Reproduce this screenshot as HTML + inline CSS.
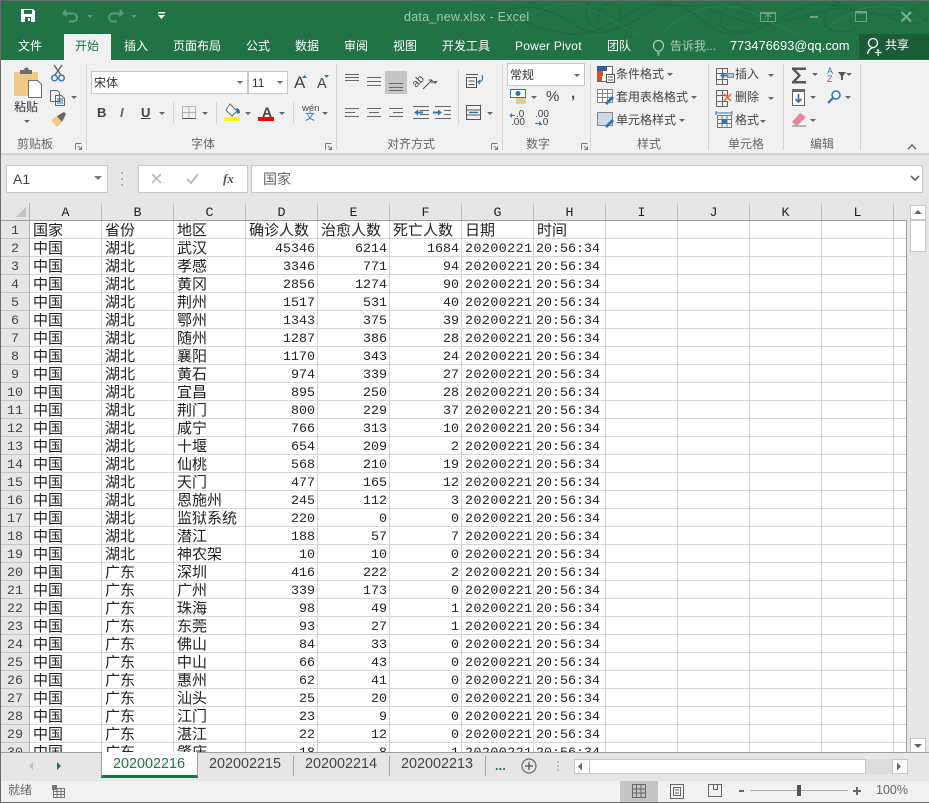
<!DOCTYPE html>
<html lang="zh"><head><meta charset="utf-8"><title>data_new.xlsx - Excel</title>
<style>
*{box-sizing:border-box}
html,body{margin:0;padding:0}
body{width:929px;height:803px;position:relative;overflow:hidden;background:#e6e6e6;font-family:"Liberation Sans","Noto Sans CJK SC",sans-serif;font-size:12px;color:#444}
.a{position:absolute}
.t{position:absolute;line-height:16px;white-space:nowrap}
.w{color:#fff}
.g{color:#666}
.box{position:absolute;background:#fff;border:1px solid #c6c6c6}
.sep{position:absolute;width:1px;background:#d4d4d4}
#grid{position:absolute;left:30px;top:221px;width:876px;height:531px;overflow:hidden;background-color:#fff;background-image:repeating-linear-gradient(90deg,transparent 0 71px,#d4d4d4 71px 72px),repeating-linear-gradient(180deg,transparent 0 17px,#d4d4d4 17px 18px)}
#grid table{position:relative;top:2px;border-collapse:collapse;table-layout:fixed;width:576px;font-family:"Liberation Mono","WenQuanYi Zen Hei","Noto Sans CJK SC",monospace;color:#222}
#grid td{width:72px;height:18px;padding:0 2px 0 3px;font-size:15px;line-height:18px;white-space:nowrap;overflow:hidden;text-align:left}
#grid td:nth-child(n+4):nth-child(-n+8){font-size:13.33px}
#grid td:nth-child(n+4):nth-child(-n+6){text-align:right;padding-right:3px}
#grid td:nth-child(7){text-align:right;letter-spacing:.45px;padding-right:2px}
#grid td:nth-child(8){padding-left:2px}
#grid tr:first-child td{font-size:15px!important;text-align:left!important;letter-spacing:0!important;padding-left:3px!important}
#rh{position:absolute;left:1px;top:221px;width:28px;height:531px;overflow:hidden;font-family:"Liberation Mono",monospace;font-size:13.33px;text-align:center;color:#444;background:#e6e6e6}
#rh div{height:18px;line-height:22px;overflow:hidden;border-bottom:1px solid #c6c6c6}
.ch{position:absolute;top:204px;height:16px;width:72px;line-height:19px;text-align:center;font-family:"Liberation Mono",monospace;font-size:13.33px;color:#222;border-right:1px solid #c0c0c0}
.tab{position:absolute;top:753px;height:25px;line-height:23px;font-size:14.4px;color:#444}
</style></head><body>

<!-- title bar -->
<div class="a" style="left:0;top:0;width:929px;height:60px;background:#217346;border-top:1px solid #6b6b6b"></div>

<svg class="a" style="left:0;top:0" width="929" height="60" fill="none">
<g stroke="#1d6a40" stroke-width="1.3">
<path d="M480 28C500 6 530 2 555 14S590 40 620 28 650 2 690 6 740 30 780 22 830 2 870 12 910 30 928 18"/>
<path d="M478 6C510 10 540 34 575 34S625 6 660 4 705 34 735 34 790 6 820 4 880 30 925 4"/>
<path d="M590 2C580 14 590 30 606 30S626 14 616 6 596 10 600 20"/>
<path d="M735 2C760 12 760 32 738 32S716 16 728 8"/>
<path d="M840 2C816 12 820 32 842 32S860 14 850 8"/>
</g>
<g stroke="#2b7c52" stroke-width="1">
<path d="M510 34C520 18 545 4 570 4S610 24 640 34"/>
<path d="M660 34C680 16 700 6 725 6S770 26 800 34"/>
<path d="M820 34C840 16 860 6 885 6S915 18 928 26"/>
</g>
</svg>

<div class="a" style="left:64px;top:34px;width:47px;height:27px;background:#f1f1f1"></div>
<div class="a" style="left:859px;top:34px;width:70px;height:25px;background:#1a5c38"></div>

<div class="t" style="left:404px;top:9px;font-size:12.5px;color:#a3c7b3;letter-spacing:.25px">data_new.xlsx - Excel</div>
<div class="t w" style="left:18px;top:38px">文件</div>
<div class="t" style="left:75px;top:38px;color:#217346">开始</div>
<div class="t w" style="left:124px;top:38px">插入</div>
<div class="t w" style="left:173px;top:38px">页面布局</div>
<div class="t w" style="left:246px;top:38px">公式</div>
<div class="t w" style="left:295px;top:38px">数据</div>
<div class="t w" style="left:344px;top:38px">审阅</div>
<div class="t w" style="left:393px;top:38px">视图</div>
<div class="t w" style="left:442px;top:38px">开发工具</div>
<div class="t w" style="left:515px;top:38px;letter-spacing:.25px">Power Pivot</div>
<div class="t w" style="left:607px;top:38px">团队</div>
<div class="t" style="left:670px;top:38px;color:#a9cdb9">告诉我...</div>
<div class="t w" style="left:730px;top:38px;font-size:12.7px;letter-spacing:.1px">773476693@qq.com</div>
<div class="t w" style="left:885px;top:37px">共享</div>

<!-- ribbon -->
<div class="a" style="left:0;top:60px;width:929px;height:95px;background:#f1f1f1;border-bottom:2px solid #d2d2d2"></div>
<div class="sep" style="left:86px;top:64px;height:86px"></div>
<div class="sep" style="left:336px;top:64px;height:86px"></div>
<div class="sep" style="left:502px;top:64px;height:86px"></div>
<div class="sep" style="left:590px;top:64px;height:86px"></div>
<div class="sep" style="left:708px;top:64px;height:86px"></div>
<div class="sep" style="left:783px;top:64px;height:86px"></div>
<div class="sep" style="left:860px;top:64px;height:86px"></div>
<div class="sep" style="left:173px;top:102px;height:22px"></div>
<div class="sep" style="left:216px;top:102px;height:22px"></div>
<div class="sep" style="left:293px;top:102px;height:22px"></div>
<div class="sep" style="left:458px;top:70px;height:55px"></div>

<div class="t" style="left:14px;top:99px;font-size:12px;color:#333">粘贴</div>
<div class="t g" style="left:17px;top:136px">剪贴板</div>
<div class="t g" style="left:191px;top:136px">字体</div>
<div class="t g" style="left:387px;top:136px">对齐方式</div>
<div class="t g" style="left:526px;top:136px">数字</div>
<div class="t g" style="left:637px;top:136px">样式</div>
<div class="t g" style="left:728px;top:136px">单元格</div>
<div class="t g" style="left:810px;top:136px">编辑</div>

<div class="box" style="left:91px;top:71px;width:157px;height:23px"></div>
<div class="box" style="left:248px;top:71px;width:40px;height:23px"></div>
<div class="t" style="left:94px;top:75px;color:#333">宋体</div>
<div class="t" style="left:252px;top:75px;color:#333">11</div>
<div class="a" style="left:385px;top:71px;width:22px;height:23px;background:#c6c6c6"></div>
<div class="box" style="left:507px;top:63px;width:78px;height:23px"></div>
<div class="t" style="left:510px;top:67px;color:#333">常规</div>

<div class="t" style="left:97px;top:105px;font-weight:bold;font-size:13px">B</div>
<div class="t" style="left:120px;top:105px;font-style:italic;font-weight:bold;font-size:13px;color:#666">I</div>
<div class="t" style="left:141px;top:105px;font-weight:bold;font-size:13px;text-decoration:underline">U</div>
<div class="t" style="left:294px;top:75px;font-size:17px">A</div>
<div class="t" style="left:317px;top:76px;font-size:14.5px">A</div>
<div class="t" style="left:262px;top:104px;font-weight:bold;font-size:14px">A</div>
<div class="t" style="left:302px;top:103px;font-size:9.5px;line-height:12px;color:#444">wén</div>
<div class="t" style="left:305px;top:112px;font-size:10px;line-height:12px;color:#2b72b5">文</div>
<div class="t" style="left:546px;top:89px;font-size:15px">%</div>
<div class="t" style="left:571px;top:86px;font-size:15px;font-weight:bold">,</div>
<div class="t" style="left:516px;top:107px;font-size:10px">.0</div>
<div class="t" style="left:511px;top:115px;font-size:10px">.00</div>
<div class="t" style="left:535px;top:107px;font-size:10px">.00</div>
<div class="t" style="left:540px;top:115px;font-size:10px">.0</div>

<div class="t" style="left:616px;top:66px">条件格式</div>
<div class="t" style="left:616px;top:89px">套用表格格式</div>
<div class="t" style="left:616px;top:112px">单元格样式</div>
<div class="t" style="left:735px;top:66px">插入</div>
<div class="t" style="left:735px;top:89px">删除</div>
<div class="t" style="left:735px;top:112px">格式</div>

<!-- formula bar -->
<div class="box" style="left:6px;top:165px;width:102px;height:28px"></div>
<div class="t" style="left:13px;top:171px;font-size:14px;color:#444">A1</div>
<div class="box" style="left:138px;top:165px;width:110px;height:28px"></div>
<div class="box" style="left:251px;top:165px;width:672px;height:28px"></div>
<div class="t" style="left:263px;top:171px;font-size:14px;color:#666;font-family:'WenQuanYi Zen Hei','Noto Sans CJK SC',sans-serif">国家</div>
<div class="t" style="left:223px;top:171px;font-family:'Liberation Serif',serif;font-style:italic;font-weight:bold;font-size:13px;color:#555">fx</div>

<!-- col headers -->
<div class="ch" style="left:30px">A</div><div class="ch" style="left:102px">B</div><div class="ch" style="left:174px">C</div><div class="ch" style="left:246px">D</div><div class="ch" style="left:318px">E</div><div class="ch" style="left:390px">F</div><div class="ch" style="left:462px">G</div><div class="ch" style="left:534px">H</div><div class="ch" style="left:606px">I</div><div class="ch" style="left:678px">J</div><div class="ch" style="left:750px">K</div><div class="ch" style="left:822px">L</div>
<div class="a" style="left:1px;top:220px;width:906px;height:1px;background:#9e9e9e"></div>
<div class="a" style="left:29px;top:203px;width:1px;height:549px;background:#b0b0b0"></div>
<div class="a" style="left:906px;top:220px;width:1px;height:532px;background:#9e9e9e"></div>

<div id="rh"><div>1</div><div>2</div><div>3</div><div>4</div><div>5</div><div>6</div><div>7</div><div>8</div><div>9</div><div>10</div><div>11</div><div>12</div><div>13</div><div>14</div><div>15</div><div>16</div><div>17</div><div>18</div><div>19</div><div>20</div><div>21</div><div>22</div><div>23</div><div>24</div><div>25</div><div>26</div><div>27</div><div>28</div><div>29</div><div>30</div></div>

<div id="grid"><table>
<tr><td>国家</td><td>省份</td><td>地区</td><td>确诊人数</td><td>治愈人数</td><td>死亡人数</td><td>日期</td><td>时间</td></tr>
<tr><td>中国</td><td>湖北</td><td>武汉</td><td>45346</td><td>6214</td><td>1684</td><td>20200221</td><td>20:56:34</td></tr>
<tr><td>中国</td><td>湖北</td><td>孝感</td><td>3346</td><td>771</td><td>94</td><td>20200221</td><td>20:56:34</td></tr>
<tr><td>中国</td><td>湖北</td><td>黄冈</td><td>2856</td><td>1274</td><td>90</td><td>20200221</td><td>20:56:34</td></tr>
<tr><td>中国</td><td>湖北</td><td>荆州</td><td>1517</td><td>531</td><td>40</td><td>20200221</td><td>20:56:34</td></tr>
<tr><td>中国</td><td>湖北</td><td>鄂州</td><td>1343</td><td>375</td><td>39</td><td>20200221</td><td>20:56:34</td></tr>
<tr><td>中国</td><td>湖北</td><td>随州</td><td>1287</td><td>386</td><td>28</td><td>20200221</td><td>20:56:34</td></tr>
<tr><td>中国</td><td>湖北</td><td>襄阳</td><td>1170</td><td>343</td><td>24</td><td>20200221</td><td>20:56:34</td></tr>
<tr><td>中国</td><td>湖北</td><td>黄石</td><td>974</td><td>339</td><td>27</td><td>20200221</td><td>20:56:34</td></tr>
<tr><td>中国</td><td>湖北</td><td>宜昌</td><td>895</td><td>250</td><td>28</td><td>20200221</td><td>20:56:34</td></tr>
<tr><td>中国</td><td>湖北</td><td>荆门</td><td>800</td><td>229</td><td>37</td><td>20200221</td><td>20:56:34</td></tr>
<tr><td>中国</td><td>湖北</td><td>咸宁</td><td>766</td><td>313</td><td>10</td><td>20200221</td><td>20:56:34</td></tr>
<tr><td>中国</td><td>湖北</td><td>十堰</td><td>654</td><td>209</td><td>2</td><td>20200221</td><td>20:56:34</td></tr>
<tr><td>中国</td><td>湖北</td><td>仙桃</td><td>568</td><td>210</td><td>19</td><td>20200221</td><td>20:56:34</td></tr>
<tr><td>中国</td><td>湖北</td><td>天门</td><td>477</td><td>165</td><td>12</td><td>20200221</td><td>20:56:34</td></tr>
<tr><td>中国</td><td>湖北</td><td>恩施州</td><td>245</td><td>112</td><td>3</td><td>20200221</td><td>20:56:34</td></tr>
<tr><td>中国</td><td>湖北</td><td>监狱系统</td><td>220</td><td>0</td><td>0</td><td>20200221</td><td>20:56:34</td></tr>
<tr><td>中国</td><td>湖北</td><td>潜江</td><td>188</td><td>57</td><td>7</td><td>20200221</td><td>20:56:34</td></tr>
<tr><td>中国</td><td>湖北</td><td>神农架</td><td>10</td><td>10</td><td>0</td><td>20200221</td><td>20:56:34</td></tr>
<tr><td>中国</td><td>广东</td><td>深圳</td><td>416</td><td>222</td><td>2</td><td>20200221</td><td>20:56:34</td></tr>
<tr><td>中国</td><td>广东</td><td>广州</td><td>339</td><td>173</td><td>0</td><td>20200221</td><td>20:56:34</td></tr>
<tr><td>中国</td><td>广东</td><td>珠海</td><td>98</td><td>49</td><td>1</td><td>20200221</td><td>20:56:34</td></tr>
<tr><td>中国</td><td>广东</td><td>东莞</td><td>93</td><td>27</td><td>1</td><td>20200221</td><td>20:56:34</td></tr>
<tr><td>中国</td><td>广东</td><td>佛山</td><td>84</td><td>33</td><td>0</td><td>20200221</td><td>20:56:34</td></tr>
<tr><td>中国</td><td>广东</td><td>中山</td><td>66</td><td>43</td><td>0</td><td>20200221</td><td>20:56:34</td></tr>
<tr><td>中国</td><td>广东</td><td>惠州</td><td>62</td><td>41</td><td>0</td><td>20200221</td><td>20:56:34</td></tr>
<tr><td>中国</td><td>广东</td><td>汕头</td><td>25</td><td>20</td><td>0</td><td>20200221</td><td>20:56:34</td></tr>
<tr><td>中国</td><td>广东</td><td>江门</td><td>23</td><td>9</td><td>0</td><td>20200221</td><td>20:56:34</td></tr>
<tr><td>中国</td><td>广东</td><td>湛江</td><td>22</td><td>12</td><td>0</td><td>20200221</td><td>20:56:34</td></tr>
<tr><td>中国</td><td>广东</td><td>肇庆</td><td>18</td><td>8</td><td>1</td><td>20200221</td><td>20:56:34</td></tr>
</table></div>

<!-- vertical scrollbar -->
<div class="box" style="left:910px;top:205px;width:16px;height:15px"></div>
<div class="box" style="left:910px;top:220px;width:16px;height:32px"></div>
<div class="box" style="left:910px;top:738px;width:16px;height:15px"></div>

<!-- sheet bar -->
<div class="a" style="left:1px;top:752px;width:928px;height:29px;background:#e6e6e6;border-top:1px solid #9e9e9e"></div>
<div class="a" style="left:101px;top:752px;width:97px;height:26px;background:#fff;border-left:1px solid #9e9e9e;border-right:1px solid #9e9e9e;border-bottom:3px solid #217346"></div>
<div class="tab" style="left:113px;color:#217346">202002216</div>
<div class="tab" style="left:209px">202002215</div>
<div class="tab" style="left:305px">202002214</div>
<div class="tab" style="left:401px">202002213</div>
<div class="sep" style="left:293px;top:756px;height:20px;background:#a0a0a0"></div>
<div class="sep" style="left:389px;top:756px;height:20px;background:#a0a0a0"></div>
<div class="sep" style="left:485px;top:756px;height:20px;background:#a0a0a0"></div>
<div class="t" style="left:495px;top:758px;color:#217346;font-weight:bold;font-size:13px">...</div>
<div class="a" style="left:866px;top:759px;width:27px;height:15px;background:#dcdcdc"></div>
<div class="box" style="left:574px;top:759px;width:16px;height:15px"></div>
<div class="box" style="left:589px;top:759px;width:277px;height:15px"></div>
<div class="box" style="left:892px;top:759px;width:16px;height:15px"></div>

<!-- status bar -->
<div class="a" style="left:1px;top:781px;width:928px;height:21px;background:#f1f1f1"></div>
<div class="a" style="left:620px;top:781px;width:38px;height:21px;background:#c6c6c6"></div>
<div class="t g" style="left:8px;top:782px">就绪</div>
<div class="t g" style="left:876px;top:782px;font-size:12.5px">100%</div>

<!-- frame -->
<div class="a" style="left:0;top:0;width:1px;height:803px;background:#6b6b6b;z-index:9"></div>
<div class="a" style="left:0;top:802px;width:929px;height:1px;background:#6b6b6b;z-index:9"></div>

<!-- icons -->
<svg class="a" style="left:0;top:0;z-index:5" width="929" height="803" fill="none">
<!-- save -->
<path d="M21 9h12l2 2v11H21z" fill="#fff"/><path d="M24 10h8v4h-8z" fill="#217346"/><path d="M25 17h6v5h-6z" fill="#217346"/><path d="M28 18h2v3h-2z" fill="#fff"/>
<!-- undo redo -->
<path d="M66 10l-2.500 3.500 3.500 2.500M64 13.500h9a4 4 0 0 1 0 8h-4" stroke="#5c9a7a" stroke-width="2"/>
<path d="M120 10l2.500 3.500-3.500 2.500M122 13.500h-9a4 4 0 0 0 0 8h4" stroke="#5c9a7a" stroke-width="2"/>
<path d="M87 15h6l-3 3zM131 15h6l-3 3z" fill="#5c9a7a"/>
<path d="M158 12h7v1.500h-7zM158 15h7l-3.500 4z" fill="#fff"/>
<!-- window controls -->
<path d="M760.500 12.500h15v9h-15zM765 17l3-3 3 3M768 15v5M760 13.500h16" stroke="#6fa287"/>
<path d="M810 17h8" stroke="#6fa287" stroke-width="2"/>
<path d="M855.500 11.500h11v10h-11z" stroke="#6fa287"/><path d="M855 12.500h12" stroke="#6fa287" stroke-width="2"/>
<path d="M901.500 12l9.500 9.500M911 12l-9.500 9.500" stroke="#7fae95" stroke-width="2"/>
<!-- bulb -->
<path d="M656.500 51c-2-2-3-3-3-5.500a5 5 0 0 1 10 0c0 2.500-1 3.500-3 5.500zM657 53h3M657.500 55h2" stroke="#a9cdb9" stroke-width="1.200"/>
<!-- person -->
<circle cx="873" cy="43" r="4.500" stroke="#fff" stroke-width="1.300"/><path d="M867.500 54c.5-3.500 2.500-5.500 5.500-6.500" stroke="#fff" stroke-width="1.300"/><path d="M877 49.500c1 .5 1.500 1 2 1.500M875 52.500h6.500M878.200 49.500v6.500" stroke="#fff" stroke-width="1.200"/>
<!-- clipboard -->
<path d="M14 72h24v24H14z" fill="#f0c987"/><path d="M20 70h4a2.500 2.500 0 0 1 5 0h3v4H20z" fill="#6d6d6d"/>
<path d="M28.500 80.500h9l4 4v13h-13z" fill="#fff" stroke="#6d6d6d"/>
<path d="M24 120h6l-3 3zM71 96h6l-3 3z" fill="#666"/>
<!-- scissors -->
<path d="M54 65l7 10M62 65l-7 10" stroke="#666" stroke-width="1.500"/><circle cx="54.500" cy="78" r="2.800" stroke="#2f75b5" stroke-width="1.400"/><circle cx="61.500" cy="78" r="2.800" stroke="#2f75b5" stroke-width="1.400"/>
<!-- copy -->
<path d="M50.500 90.500h7l2 2v9h-9zM55.500 95.500h6l3 3v7h-9z" stroke="#666" fill="#f1f1f1"/><path d="M57 99h6M57 101h6M57 103h6" stroke="#2f75b5"/>
<!-- brush -->
<path d="M51 120l6-4 5 6-5 5q-4-4-6-7z" fill="#f0c987"/><path d="M57 116l7-4 2 2-4 8z" fill="#666"/>
<path d="M182.500 106.500h13v12h-13zM189 106.500v12M182.500 112.500h13" stroke="#777" stroke-dasharray="1 1"/>
<path d="M182.500 118.500h13" stroke="#555"/>
<!-- dropdown arrows -->
<path d="M237 81h6l-3 3zM277 81h6l-3 3zM159 112h6l-3 3zM202 112h6l-3 3zM245 112h6l-3 3zM279 112h6l-3 3zM322 112h6l-3 3zM432 81h6l-3 3zM487 112h6l-3 3zM574 74h6l-3 3zM531 96h6l-3 3zM667 73h6l-3 3zM691 96h6l-3 3zM679 119h6l-3 3zM768 74h6l-3 3zM768 97h6l-3 3zM760 120h6l-3 3zM812 73h6l-3 3zM846 73h6l-3 3zM810 96h6l-3 3zM845 96h6l-3 3zM810 119h6l-3 3z" fill="#666"/>
<!-- grow/shrink tips -->
<path d="M302 78l2.500-3 2.500 3zM324 75h5l-2.500 3z" fill="#2f75b5"/>
<!-- fill colour -->
<path d="M230 104l7 7-5 5-6-6z" stroke="#666" fill="#fff"/><path d="M236 108q4 0 4 5l-3 1z" fill="#2f75b5"/>
<rect x="224" y="117" width="16" height="4" fill="#ff0"/><rect x="258" y="117" width="16" height="4" fill="#f00"/>
<!-- align -->
<path d="M345 74.500h14M345 77.500h14M345 80.500h14M367 77.500h14M367 81.500h14M367 85.500h14M389 83.500h14M389 87.500h14M389 90.500h14" stroke="#666"/>
<path d="M345 108.500h14M345 112.500h10M345 116.500h14M367 108.500h14M369 112.500h10M367 116.500h14M389 108.500h14M393 112.500h10M389 116.500h14" stroke="#666"/>
<path d="M413 106.500h16M420 110.500h9M420 114.500h9M413 118.500h16M435 106.500h16M444 110.500h7M444 114.500h7M435 118.500h16" stroke="#666"/>
<path d="M414 112.500l4-3v6zM418 111.500h5v2h-5zM442 112.500l-4-3v6zM433 111.500h5v2h-5z" fill="#2f75b5"/>
<!-- orientation -->
<text x="416" y="88" font-size="11" fill="#444" font-family="Liberation Sans" transform="rotate(-45 416 88)">ab</text>
<path d="M423 89l9-9M432 80v3.500M432 80h-3.500" stroke="#555" stroke-width="1.100"/>
<!-- wrap -->
<path d="M466.500 77.500h10v10h-10zM466 74.500h12M468.500 81h6M468.500 84.500h6" stroke="#555"/><path d="M482 75c1.500 4 0 7-4 7M480 80l-2 2 2 2" stroke="#2f75b5" stroke-width="1.200"/>
<path d="M466.500 105.500h14v14h-14zM466.500 110h14M466.500 115h14" stroke="#555"/><path d="M469 112.500h9" stroke="#2f75b5" stroke-width="1.500"/>
<!-- currency -->
<rect x="510.500" y="89.500" width="15" height="8" stroke="#2f75b5" fill="#fff"/><circle cx="518" cy="93.500" r="2.500" fill="#2f75b5"/><path d="M516 98h10v6h-10z" fill="#f0c987"/>
<path d="M510 115.500h5M510 115.500l2-2M510 115.500l2 2M535 123.500h6M541 123.500l-2-2M541 123.500l-2 2" stroke="#2f75b5"/>
<!-- styles -->
<rect x="597.500" y="66.500" width="15" height="15" stroke="#666" fill="#fff"/><path d="M597 66h10v5h-10z" fill="#2f5f9e"/><path d="M597 71h6v5h-6zM597 76h5v5h-5z" fill="#d2532a"/><path d="M606.500 74.500h8v8h-8z" fill="#fff" stroke="#555"/><path d="M608 77h5M608 80h5" stroke="#555"/>
<path d="M597.500 89.500h15v13h-15zM597.500 93.500h15M597.500 97.500h15M602.500 89.500v13M607.500 89.500v13" stroke="#888" fill="#fff"/><path d="M605 103l7-7 2 2-7 7z" fill="#2f75b5"/>
<rect x="597.500" y="112.500" width="15" height="13" stroke="#888" fill="#cdd9e8"/><path d="M605 126l7-7 2 2-7 7z" fill="#2f75b5"/>
<!-- cells -->
<path d="M716.500 68.500h6v5h-6zM716.500 73.500h6v6h-6zM716.500 79.500h6v5h-6zM722.500 79.500h5v5h-5zM722.500 68.500h5v5h-5z" stroke="#666"/><path d="M720 75.500l4-3v6zM723 74.500h4v2h-4z" fill="#2f75b5"/><path d="M727.500 73.500h6v4h-6z" fill="#b5c8dd" stroke="#888"/>
<path d="M716.500 90.500h6v5h-6zM716.500 95.500h6v6h-6zM716.500 101.500h6v5h-6zM722.500 101.500h5v5h-5zM722.500 90.500h5v5h-5z" stroke="#666"/><path d="M724 94l7 7M731 94l-7 7" stroke="#e2672f" stroke-width="1.500"/>
<path d="M717.500 115.500h14v12h-14zM717.500 119.500h14M717.500 123.500h14M722 115.500v12M727 115.500v12" stroke="#777"/><rect x="722" y="119" width="5" height="5" fill="#2f75b5"/><path d="M716 113h16M716 111v4M732 111v4" stroke="#2f75b5"/>
<!-- editing -->
<path d="M792 67.500h14v2.500h-10l5 5.500-5 5.500h10v2.500h-14v-2l6-6-6-6z" fill="#555"/>
<text x="827" y="74" font-size="9" fill="#2f75b5" font-family="Liberation Sans">A</text><text x="827" y="82" font-size="9" fill="#7f4fa0" font-family="Liberation Sans">Z</text>
<path d="M838 72h8l-3 4v4h-2v-4z" fill="#555"/>
<path d="M792.500 89.500h12v16h-12z" stroke="#666" fill="#fff"/><rect x="792" y="89" width="13" height="3" fill="#666"/><path d="M798.500 94v8M795.500 99l3 3 3-3" stroke="#2f75b5" stroke-width="1.800"/>
<circle cx="836" cy="95" r="4" stroke="#2f75b5" stroke-width="1.500"/><path d="M833 98l-5 5" stroke="#2f75b5" stroke-width="2.200"/>
<path d="M792 122l8-9 6 4-8 8h-3z" fill="#e9849a"/><path d="M792 126h14" stroke="#777"/>
<path d="M908 149l4-4 4 4" stroke="#666" stroke-width="1.500"/>
<!-- launchers -->
<path d="M75.500 143.500h6M75.500 143.500v6M78 146l3.500 3.500M81.500 146.500v3h-3M325.500 143.500h6M325.500 143.500v6M328 146l3.500 3.500M331.500 146.500v3h-3M491.500 143.500h6M491.500 143.500v6M494 146l3.500 3.500M497.500 146.500v3h-3M581.500 143.500h6M581.500 143.500v6M584 146l3.500 3.500M587.500 146.500v3h-3" stroke="#777"/>
<!-- formula bar -->
<path d="M94 176h8l-4 4z" fill="#777"/><path d="M122 172v2M122 178v2M122 184v2" stroke="#b0b0b0" stroke-width="2"/>
<path d="M152 174l9 9M161 174l-9 9" stroke="#bdbdbd" stroke-width="1.800"/><path d="M187 179l4 4 7-9" stroke="#bdbdbd" stroke-width="2"/>
<path d="M911 176l4 4 4-4" stroke="#666" stroke-width="1.800"/>
<!-- corner triangle -->
<path d="M26 207v10H16z" fill="#c4c4c4"/>
<!-- scrollbars -->
<path d="M914 214l4-4 4 4zM914 744h8l-4 4zM578 766.500l4-4v8zM897 762.500l4 4-4 4z" fill="#666"/>
<!-- tab nav -->
<path d="M33 762l-4 4 4 4z" fill="#bdbdbd"/><path d="M57 762l4 4-4 4z" fill="#217346"/>
<circle cx="529" cy="766" r="7" stroke="#666" stroke-width="1.200"/><path d="M525 766h8M529 762v8" stroke="#666" stroke-width="1.500"/>
<path d="M558 761v2M558 765v2M558 769v2" stroke="#c0c0c0" stroke-width="2"/>
<!-- status icons -->
<path d="M52 785h5v5h-5z" fill="#777"/><path d="M53.500 788.500h11v9h-11zM57 788.500v9M61 788.500v9M53.500 791.500h11M53.500 794.500h11" stroke="#777"/>
<path d="M632.500 784.500h13v13h-13zM636.500 784.500v13M641 784.500v13M632.500 789h13M632.500 793h13" stroke="#666"/>
<path d="M670.500 784.500h13v14h-13zM673.500 787.500h7v8h-7zM675 790h4M675 793h4" stroke="#666"/>
<path d="M708.500 784.500h13v12h-13zM713.500 784.500v5h4v-5" stroke="#666"/>
<path d="M739 791h5M853 791h8M857 787v8" stroke="#666" stroke-width="2"/>
<path d="M750 790.500h98" stroke="#aaa"/><rect x="797" y="785" width="4" height="11" fill="#555"/>
</svg>
</body></html>
